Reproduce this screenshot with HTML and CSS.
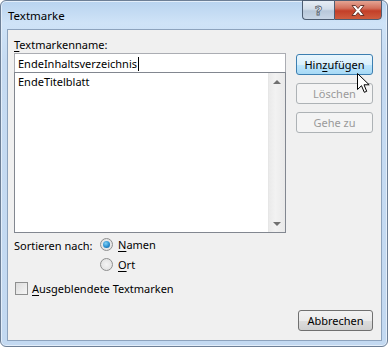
FILE: index.html
```html
<!DOCTYPE html>
<html lang="de">

<head>
    <meta charset="UTF-8">
    <title>Textmarke</title>
    <link rel="stylesheet" href="styles.css">
</head>

<body>
    <div class="window">
        <div class="titlebar">
            <span class="title">Textmarke</span>
            <div class="caption-buttons">
                <div class="cap-btn help"><span>?</span></div>
                <div class="cap-btn close">
                    <svg width="14" height="11" viewBox="0 0 14 11">
                        <path d="M1 0.5 H4.5 L7 3.5 L9.5 0.5 H13 L9 5.5 L13 10.5 H9.5 L7 7.5 L4.5 10.5 H1 L5 5.5 Z"
                            fill="#ffffff" stroke="#5a2a22" stroke-width="0.9" stroke-linejoin="round" />
                    </svg>
                </div>
            </div>
        </div>

        <div class="client">
            <div class="main">
                <div class="left">
                    <label class="field-label"><u>T</u>extmarkenname:</label>
                    <div class="name-input">EndeInhaltsverzeichnis<span class="caret"></span></div>
                    <div class="listbox">
                        <div class="items">
                            <div class="item">EndeTitelblatt</div>
                        </div>
                        <div class="scrollbar">
                            <span class="arrow up"></span>
                            <span class="arrow down"></span>
                        </div>
                    </div>
                </div>
                <div class="right">
                    <button class="btn focused">Hin<u>z</u>ufügen</button>
                    <button class="btn disabled">Löschen</button>
                    <button class="btn disabled">Gehe zu</button>
                </div>
            </div>

            <div class="sort-row">
                <span class="sort-label">Sortieren nach:</span>
                <div class="radios">
                    <div class="radio-row"><span class="radio checked"></span><span><u>N</u>amen</span></div>
                    <div class="radio-row"><span class="radio"></span><span><u>O</u>rt</span></div>
                </div>
            </div>

            <div class="check-row">
                <span class="checkbox"></span><span><u>A</u>usgeblendete Textmarken</span>
            </div>

            <div class="footer">
                <button class="btn">Abbrechen</button>
            </div>
        </div>

        <!-- mouse pointer over the dialog -->
        <svg class="pointer" width="14" height="22" viewBox="0 0 14 22">
            <path d="M0.5 0.5 V16.5 L4.5 12.7 L7.3 19.3 L9.7 18.3 L7 11.8 L12.2 11.8 Z" fill="#ffffff" stroke="#000000"
                stroke-width="1" stroke-linejoin="miter" />
        </svg>
    </div>
</body>

</html>
```

FILE: styles.css
```css
* {
    box-sizing: border-box;
}

body {
    margin: 0;
    font-family: "Noto Sans", "Open Sans", sans-serif;
    font-size: 11px;
    color: #000000;
    background: #ffffff;
}

u {
    text-decoration: underline;
    text-underline-offset: 2px;
}

.window {
    position: relative;
    width: 388px;
    height: 347px;
    border: 1px solid #6d7f96;
    border-radius: 6px;
    background: linear-gradient(to bottom, #b8d3ef 0px, #cfe3f7 22px, #c6dbf2 60px, #c3d9f1 100%);
    box-shadow: inset 0 0 0 1px #e3eefa;
}

.titlebar {
    position: relative;
    height: 28px;
}

.title {
    position: absolute;
    left: 7px;
    top: 7px;
    font-size: 11.5px;
    color: #000000;
}

.caption-buttons {
    position: absolute;
    top: -1px;
    right: 5px;
    display: flex;
}

.cap-btn {
    height: 20px;
    border: 1px solid #4d5d72;
    display: flex;
    align-items: center;
    justify-content: center;
}

.help {
    width: 32px;
    border-right: none;
    border-radius: 0 0 0 4px;
    background: linear-gradient(to bottom, #e6edf5 0%, #d2dde9 45%, #b8c8da 55%, #c8d6e6 100%);
}

.help span {
    font-family: "DejaVu Sans", sans-serif;
    font-weight: bold;
    font-size: 13px;
    color: #f2f4f7;
    -webkit-text-stroke: 0.8px #55606e;
    line-height: 1;
}

.close {
    width: 48px;
    border-radius: 0 0 4px 0;
    background: linear-gradient(to bottom, #e4a493 0%, #d2705c 40%, #c33f28 55%, #cf5d3f 100%);
}

.client {
    margin: 0 5px 0 6px;
    height: 312px;
    border: 1px solid #8da3bd;
    background: #f0f0f0;
    padding: 7px 8px 0 6px;
    display: flex;
    flex-direction: column;
}

.main {
    display: grid;
    grid-template-columns: 272px 77px;
    column-gap: 10px;
}

.left {
    display: flex;
    flex-direction: column;
}

.field-label {
    height: 16px;
    line-height: 16px;
}

.name-input {
    height: 20px;
    border: 1px solid #abadb3;
    background: #ffffff;
    padding: 1px 0 0 3px;
    line-height: 16px;
    display: flex;
    align-items: center;
}

.caret {
    display: inline-block;
    width: 1px;
    height: 14px;
    background: #000000;
    margin-left: 1px;
}

.listbox {
    height: 161px;
    margin-top: -1px;
    border: 1px solid #828790;
    background: #ffffff;
    display: flex;
}

.items {
    flex: 1;
    padding: 1px 3px;
}

.item {
    line-height: 16px;
}

.scrollbar {
    width: 17px;
    border-left: 1px solid #e6e6e6;
    background: linear-gradient(to right, #eaeaea, #f2f2f2 40%, #e9e9e9);
    position: relative;
    display: flex;
    flex-direction: column;
    justify-content: space-between;
    align-items: center;
    padding: 7px 0 6px;
}

.arrow {
    width: 0;
    height: 0;
    border-left: 4px solid transparent;
    border-right: 4px solid transparent;
}

.arrow.up {
    border-bottom: 4px solid #707070;
}

.arrow.down {
    border-top: 4px solid #707070;
}

.right {
    display: flex;
    flex-direction: column;
    gap: 8px;
    padding-top: 17px;
}

.btn {
    font-family: inherit;
    font-size: 11px;
    width: 77px;
    height: 21px;
    padding: 0;
    border: 1px solid #707070;
    border-radius: 3px;
    background: linear-gradient(to bottom, #f2f2f2 0%, #ebebeb 50%, #dddddd 51%, #cfcfcf 100%);
    color: #000000;
    line-height: 17px;
}

.btn.focused {
    border-color: #3c7fb1;
    background: linear-gradient(to bottom, #eaf6fd 0%, #d9f0fc 50%, #bee6fd 51%, #a7d9f5 100%);
}

.btn.disabled {
    border-color: #adb2b5;
    background: #f4f4f4;
    color: #9a9a9a;
}

.sort-row {
    display: flex;
    margin-top: 3px;
}

.sort-label {
    width: 86px;
    line-height: 16px;
    padding-top: 2px;
}

.radios {
    display: flex;
    flex-direction: column;
    gap: 4px;
}

.radio-row {
    display: flex;
    align-items: center;
    gap: 5px;
    height: 16px;
}

.radio {
    width: 13px;
    height: 13px;
    border-radius: 50%;
    border: 1px solid #8e8f8f;
    background: radial-gradient(circle, #f4f4f4 0%, #dcdcdc 100%);
    position: relative;
}

.radio.checked::after {
    content: "";
    position: absolute;
    left: 2px;
    top: 2px;
    width: 7px;
    height: 7px;
    border-radius: 50%;
    background: radial-gradient(circle at 40% 35%, #7fd0f5 0%, #2a8fcf 55%, #0f5a98 100%);
}

.check-row {
    display: flex;
    align-items: center;
    gap: 4px;
    margin-top: 9px;
    padding-left: 1px;
}

.checkbox {
    width: 13px;
    height: 13px;
    border: 1px solid #8e8f8f;
    background: linear-gradient(135deg, #dcdcdc, #f6f6f6);
}

.footer {
    margin-top: auto;
    display: flex;
    justify-content: flex-end;
    padding-bottom: 9px;
    padding-right: 0;
}

.footer .btn {
    width: 75px;
}

.pointer {
    position: absolute;
    left: 356px;
    top: 72px;
}
```
